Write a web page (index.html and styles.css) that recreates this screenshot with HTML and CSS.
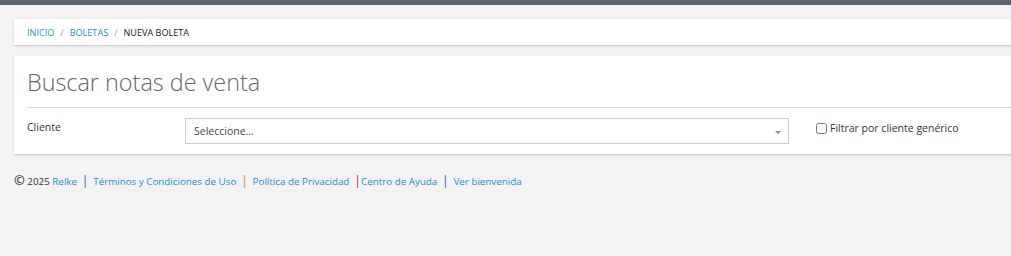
FILE: index.html
```html
<!DOCTYPE html>
<html lang="es">
<head>
  <meta charset="UTF-8" />
  <meta name="viewport" content="width=device-width, initial-scale=1.0" />
  <title>Nueva Boleta</title>
  <link rel="stylesheet" href="styles.css">
</head>
<body>
  <div class="topbar"></div>

  <div class="page">
    <div class="card breadcrumb">
      <a href="#">Inicio</a>
      <span class="sep">/</span>
      <a href="#">Boletas</a>
      <span class="sep">/</span>
      <span class="current">Nueva Boleta</span>
    </div>

    <div class="card panel">
      <h2>Buscar notas de venta</h2>
      <div class="form-row">
        <label class="field-label" for="cliente">Cliente</label>
        <div class="select-box" id="cliente">
          <span>Seleccione...</span>
          <span class="caret"></span>
        </div>
        <label class="check">
          <input type="checkbox" />
          Filtrar por cliente genérico
        </label>
      </div>
    </div>

    <div class="footer">
      <span class="copy">&copy;</span> 2025 <a href="#">Relke</a>
      <span class="bar blue">|</span>
      <a href="#">Términos y Condiciones de Uso</a>
      <span class="bar orange">|</span>
      <a href="#">Política de Privacidad</a>
      <span class="bar red tight">|</span><a href="#">Centro de Ayuda</a>
      <span class="bar blue">|</span>
      <a href="#">Ver bienvenida</a>
    </div>
  </div>
</body>
</html>
```

FILE: styles.css
```css
body {
  font-family: "Open Sans", Arial, sans-serif;
  margin: 0;
  padding: 0;
  background-color: #f3f3f3;
  color: #333;
  overflow: hidden;
}

a {
  color: #1b8fcf;
  text-decoration: none;
}

.topbar {
  height: 5px;
  background-color: #5f6670;
}

.page {
  padding: 14px 0 0 14px;
}

.card {
  background-color: #fff;
  margin-right: -20px;
  box-shadow: 0 1px 2px rgba(0, 0, 0, 0.2);
}

.breadcrumb {
  height: 26px;
  display: flex;
  align-items: center;
  padding-left: 13px;
  font-size: 9.1px;
  text-transform: uppercase;
}

.breadcrumb .sep {
  color: #999;
  margin: 0 6px;
}

.breadcrumb .current {
  color: #222;
}

.panel {
  margin-top: 11px;
  padding: 0 0 10px 13px;
}

h2 {
  margin: 0;
  padding: 11px 0 10px;
  font-size: 23.4px;
  font-weight: 300;
  color: #5f6670;
  line-height: 30px;
  border-bottom: 1px solid #ddd;
}

.form-row {
  display: grid;
  grid-template-columns: 158px 604px auto;
  align-items: start;
  padding-top: 10px;
}

.field-label {
  font-size: 10.5px;
  padding-top: 2px;
}

.select-box {
  height: 24px;
  border: 1px solid #ccc;
  display: flex;
  align-items: center;
  justify-content: space-between;
  padding: 0 7px 0 8px;
  font-size: 10.5px;
  color: #444;
}

.caret {
  width: 0;
  height: 0;
  border-left: 3px solid transparent;
  border-right: 3px solid transparent;
  border-top: 3px solid #888;
  margin-top: 2px;
}

.check {
  font-size: 10.5px;
  margin-left: 27px;
  padding-top: 3px;
  display: flex;
  align-items: center;
  gap: 3px;
}

.check input {
  margin: 0;
  width: 11px;
  height: 11px;
}

.footer {
  padding-top: 17px;
  font-size: 9.8px;
  color: #333;
}

.copy {
  font-size: 13px;
  font-weight: 600;
}

.bar {
  font-size: 13px;
  margin: 0 2px;
}

.bar.tight {
  margin-right: 0;
}

.blue {
  color: #2f6fb2;
}

.orange {
  color: #de8c2a;
}

.red {
  color: #b0353f;
}
```
